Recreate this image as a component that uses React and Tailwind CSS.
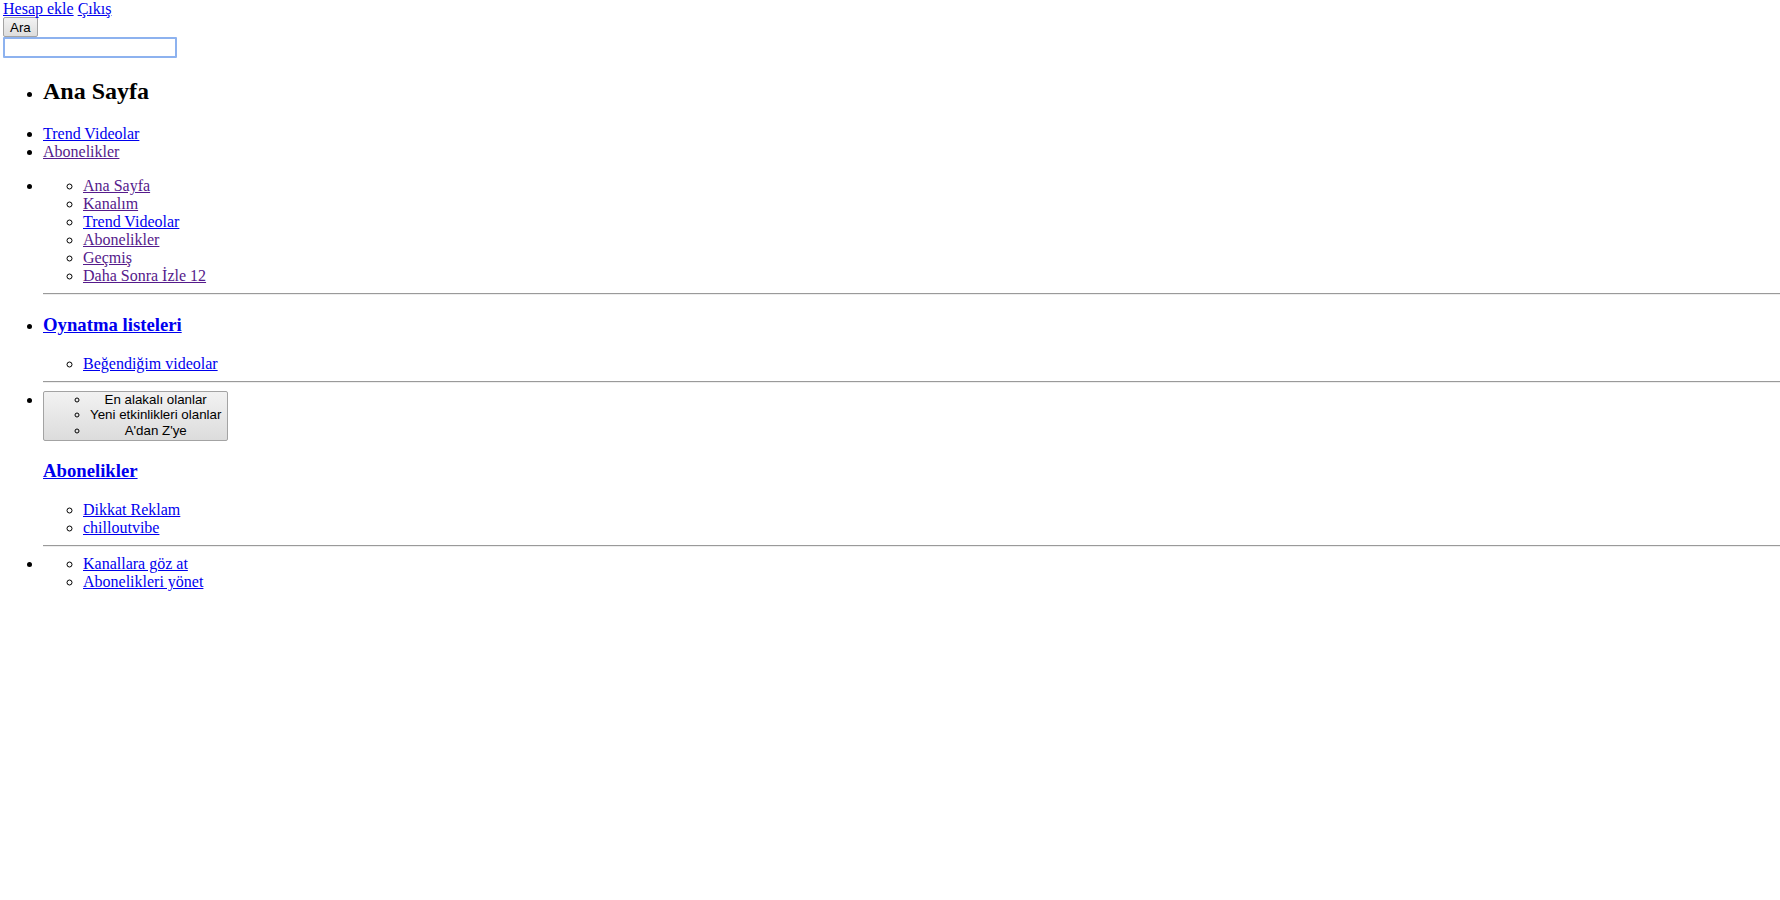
import React from "react";

const BLUE = "text-[#0000ee] underline";
const PURPLE = "text-[#551a8b] underline";

function Hr() {
  return <div className="my-2 h-[2px] border-t border-b border-t-[#9a9a9a] border-b-[#eeeeee]" />;
}

function Sub({ items }) {
  return (
    <ul className="list-[circle] list-outside pl-10">
      {items.map(([t, v]) => (
        <li key={t}>
          <a href="#" className={v ? PURPLE : BLUE}>{t}</a>
        </li>
      ))}
    </ul>
  );
}

export default function App() {
  return (
    <div className="min-h-[900px] bg-white text-black font-['Liberation_Serif',serif] text-[16px] leading-[normal] pl-[3px]">
      <div className="h-[17px]">
        <a href="#" className={BLUE}>Hesap ekle</a>{" "}
        <a href="#" className={BLUE}>Çıkış</a>
      </div>
      <div>
        <button className="block h-[20px] px-[6px] border border-[#a3a3a3] rounded-[2px] bg-gradient-to-b from-[#f2f2f2] to-[#dddddd] font-['Liberation_Sans',sans-serif] text-[13.33px] leading-[15px] text-black">
          Ara
        </button>
      </div>
      <div>
        <input
          type="text"
          className="block w-[174px] h-[21px] border-2 border-[#8db2ef] rounded-[1px] outline-none bg-white"
        />
      </div>

      <ul className="list-disc list-outside pl-10 mt-4 mb-4">
        <li>
          <h2 className="text-[24px] font-bold my-[19.92px]">Ana Sayfa</h2>
        </li>
        <li><a href="#" className={BLUE}>Trend Videolar</a></li>
        <li><a href="#" className={PURPLE}>Abonelikler</a></li>
      </ul>

      <ul className="list-disc list-outside pl-10 mt-4">
        <li>
          <Sub
            items={[
              ["Ana Sayfa", true],
              ["Kanalım", true],
              ["Trend Videolar", false],
              ["Abonelikler", true],
              ["Geçmiş", true],
              ["Daha Sonra İzle 12", true],
            ]}
          />
          <Hr />
        </li>
        <li>
          <h3 className="text-[18.72px] leading-[22.6px] font-bold my-[18.72px]">
            <a href="#" className={BLUE}>Oynatma listeleri</a>
          </h3>
          <Sub items={[["Beğendiğim videolar", false]]} />
          <Hr />
        </li>
        <li>
          <button className="inline-block align-top px-[6px] pt-0 pb-[2px] border border-[#a3a3a3] rounded-[2px] bg-gradient-to-b from-[#f2f2f2] to-[#dcdcdc] font-['Liberation_Sans',sans-serif] text-[13.33px] leading-[15.4px] text-black text-center">
            <ul className="list-[circle] list-outside pl-10">
              <li>En alakalı olanlar</li>
              <li>Yeni etkinlikleri olanlar</li>
              <li>A'dan Z'ye</li>
            </ul>
          </button>
          <h3 className="text-[18.72px] leading-[22.6px] font-bold my-[18.72px]">
            <a href="#" className={BLUE}>Abonelikler</a>
          </h3>
          <Sub items={[["Dikkat Reklam", false], ["chilloutvibe", false]]} />
          <Hr />
        </li>
        <li>
          <Sub items={[["Kanallara göz at", false], ["Abonelikleri yönet", false]]} />
        </li>
      </ul>
    </div>
  );
}
